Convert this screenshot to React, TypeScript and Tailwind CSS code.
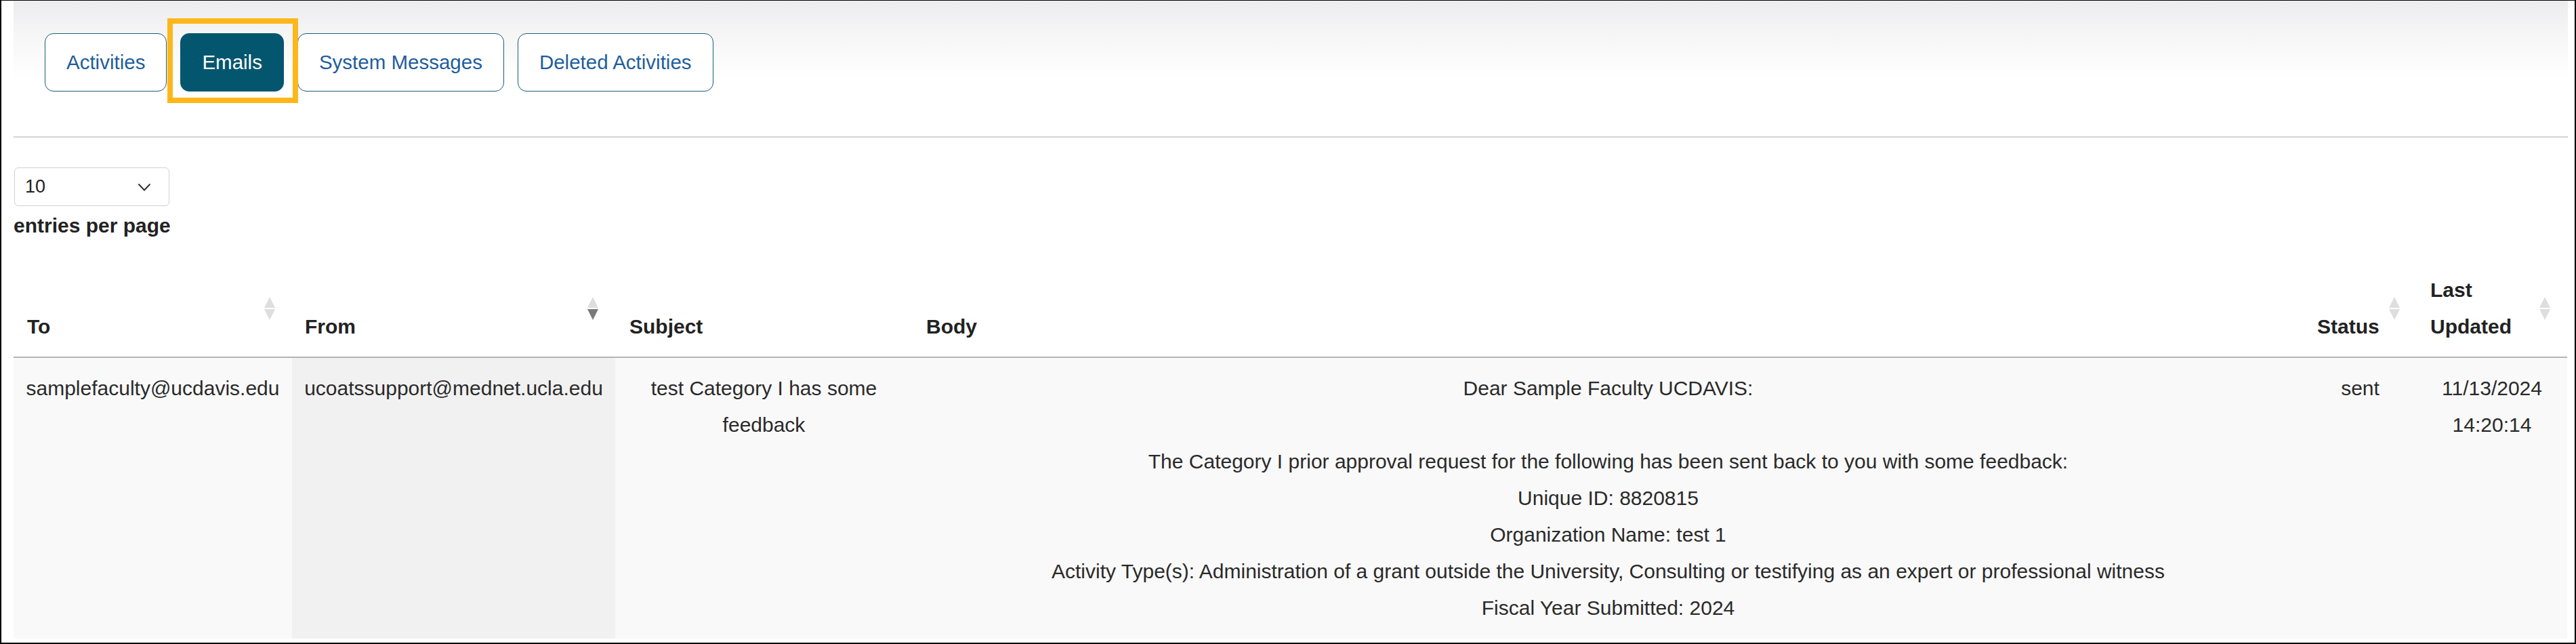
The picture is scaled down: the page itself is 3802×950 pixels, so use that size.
import React from 'react';

const TABS = ['Activities', 'Emails', 'System Messages', 'Deleted Activities'];

const BODY_LINES = [
  'Dear Sample Faculty UCDAVIS:',
  '',
  'The Category I prior approval request for the following has been sent back to you with some feedback:',
  'Unique ID: 8820815',
  'Organization Name: test 1',
  'Activity Type(s): Administration of a grant outside the University, Consulting or testifying as an expert or professional witness',
  'Fiscal Year Submitted: 2024',
];

// up/down sort arrows, the active one is darker
function SortIcon({ active }: { active?: 'asc' | 'desc' }) {
  return (
    <svg
      width="18"
      height="34"
      viewBox="0 0 18 34"
      className="absolute right-[24px] top-1/2 -translate-y-1/2"
    >
      <polygon points="9,0 17,16 1,16" fill={active === 'asc' ? '#7a7a7a' : '#dedede'} />
      <polygon points="1,18 17,18 9,34" fill={active === 'desc' ? '#7a7a7a' : '#dedede'} />
    </svg>
  );
}

function Tab({ label, active }: { label: string; active?: boolean }) {
  if (active) {
    return (
      <span className="relative">
        <button className="h-[86px] px-[31px] rounded-[13px] bg-[#04566e] border border-[#04566e] text-white text-[29.5px]">
          {label}
        </button>
        {/* highlight frame drawn over the screenshot */}
        <span className="pointer-events-none absolute -left-[19px] -right-[21px] -top-[22px] -bottom-[17px] border-[8px] border-[#fdb71a]" />
      </span>
    );
  }
  return (
    <button className="h-[86px] px-[31px] rounded-[13px] bg-white border border-[#1a5c74] text-[#1f5d9c] text-[29.5px]">
      {label}
    </button>
  );
}

export default function App() {
  return (
    <div className="w-[3802px] h-[950px] overflow-hidden bg-white border-l-2 border-t border-r-2 border-b-2 border-black font-['Liberation_Sans',Arial,sans-serif] text-[#222]">
      <div className="ml-[18px] mr-[10px] h-full bg-[linear-gradient(to_bottom,#ececee_0px,#f5f5f6_45px,#ffffff_115px)]">
        {/* Tabs */}
        <div className="flex gap-[20px] pl-[46px] pt-[48px]">
          {TABS.map((t) => (
            <Tab key={t} label={t} active={t === 'Emails'} />
          ))}
        </div>

        <div className="mt-[66px] h-[2px] bg-[#d4d4d4]" />

        {/* Page length */}
        <div className="mt-[44px] ml-px w-[229px] h-[57px] rounded-[6px] border border-[#d2d2d2] bg-white flex items-center justify-between pl-[15px] pr-[26px]">
          <span className="text-[27px] text-[#222]">10</span>
          <svg width="20" height="12" viewBox="0 0 20 12">
            <polyline points="1.5,1.5 10,10.5 18.5,1.5" fill="none" stroke="#333" strokeWidth="2" />
          </svg>
        </div>
        <div className="mt-[2px] text-[30px] leading-[54px] font-bold text-[#222]">entries per page</div>

        {/* Table */}
        <table className="mt-[23px] w-[3769px] table-fixed border-collapse text-[30px] leading-[54px]">
          <colgroup>
            <col className="w-[411px]" />
            <col className="w-[477px]" />
            <col className="w-[439px]" />
            <col className="w-[2053px]" />
            <col className="w-[167px]" />
            <col className="w-[222px]" />
          </colgroup>
          <thead>
            <tr className="border-b-2 border-[#b3b3b3]">
              <th className="relative align-bottom text-left font-bold pl-[20px] pr-[50px] pt-[18px] pb-[17px]">
                To
                <SortIcon />
              </th>
              <th className="relative align-bottom text-left font-bold pl-[19px] pr-[50px] pt-[18px] pb-[17px]">
                From
                <SortIcon active="desc" />
              </th>
              <th className="align-bottom text-left font-bold pl-[21px] pr-[20px] pt-[18px] pb-[17px]">Subject</th>
              <th className="align-bottom text-left font-bold pl-[20px] pr-[20px] pt-[18px] pb-[17px]">Body</th>
              <th className="relative align-bottom text-left font-bold pl-[20px] pr-[50px] pt-[18px] pb-[17px]">
                Status
                <SortIcon />
              </th>
              <th className="relative align-bottom text-left font-bold pl-[20px] pr-[50px] pt-[18px] pb-[17px]">
                Last Updated
                <SortIcon />
              </th>
            </tr>
          </thead>
          <tbody className="text-[#2a2a2a]">
            <tr className="bg-[#f9f9f9]">
              <td className="align-top text-center px-[14px] pt-[18px] pb-[18px]">samplefaculty@ucdavis.edu</td>
              <td className="align-top text-center px-[14px] pt-[18px] pb-[18px] bg-[#f1f1f1]">
                ucoatssupport@mednet.ucla.edu
              </td>
              <td className="align-top text-center px-[24px] pt-[18px] pb-[18px]">test Category I has some feedback</td>
              <td className="align-top text-center px-[24px] pt-[18px] pb-[18px]">
                {BODY_LINES.map((line, i) =>
                  line ? <div key={i}>{line}</div> : <div key={i} className="h-[54px]" />
                )}
              </td>
              <td className="align-top text-center px-[14px] pt-[18px] pb-[18px]">sent</td>
              <td className="align-top text-center px-[14px] pt-[18px] pb-[18px]">11/13/2024 14:20:14</td>
            </tr>
          </tbody>
        </table>
      </div>
    </div>
  );
}
